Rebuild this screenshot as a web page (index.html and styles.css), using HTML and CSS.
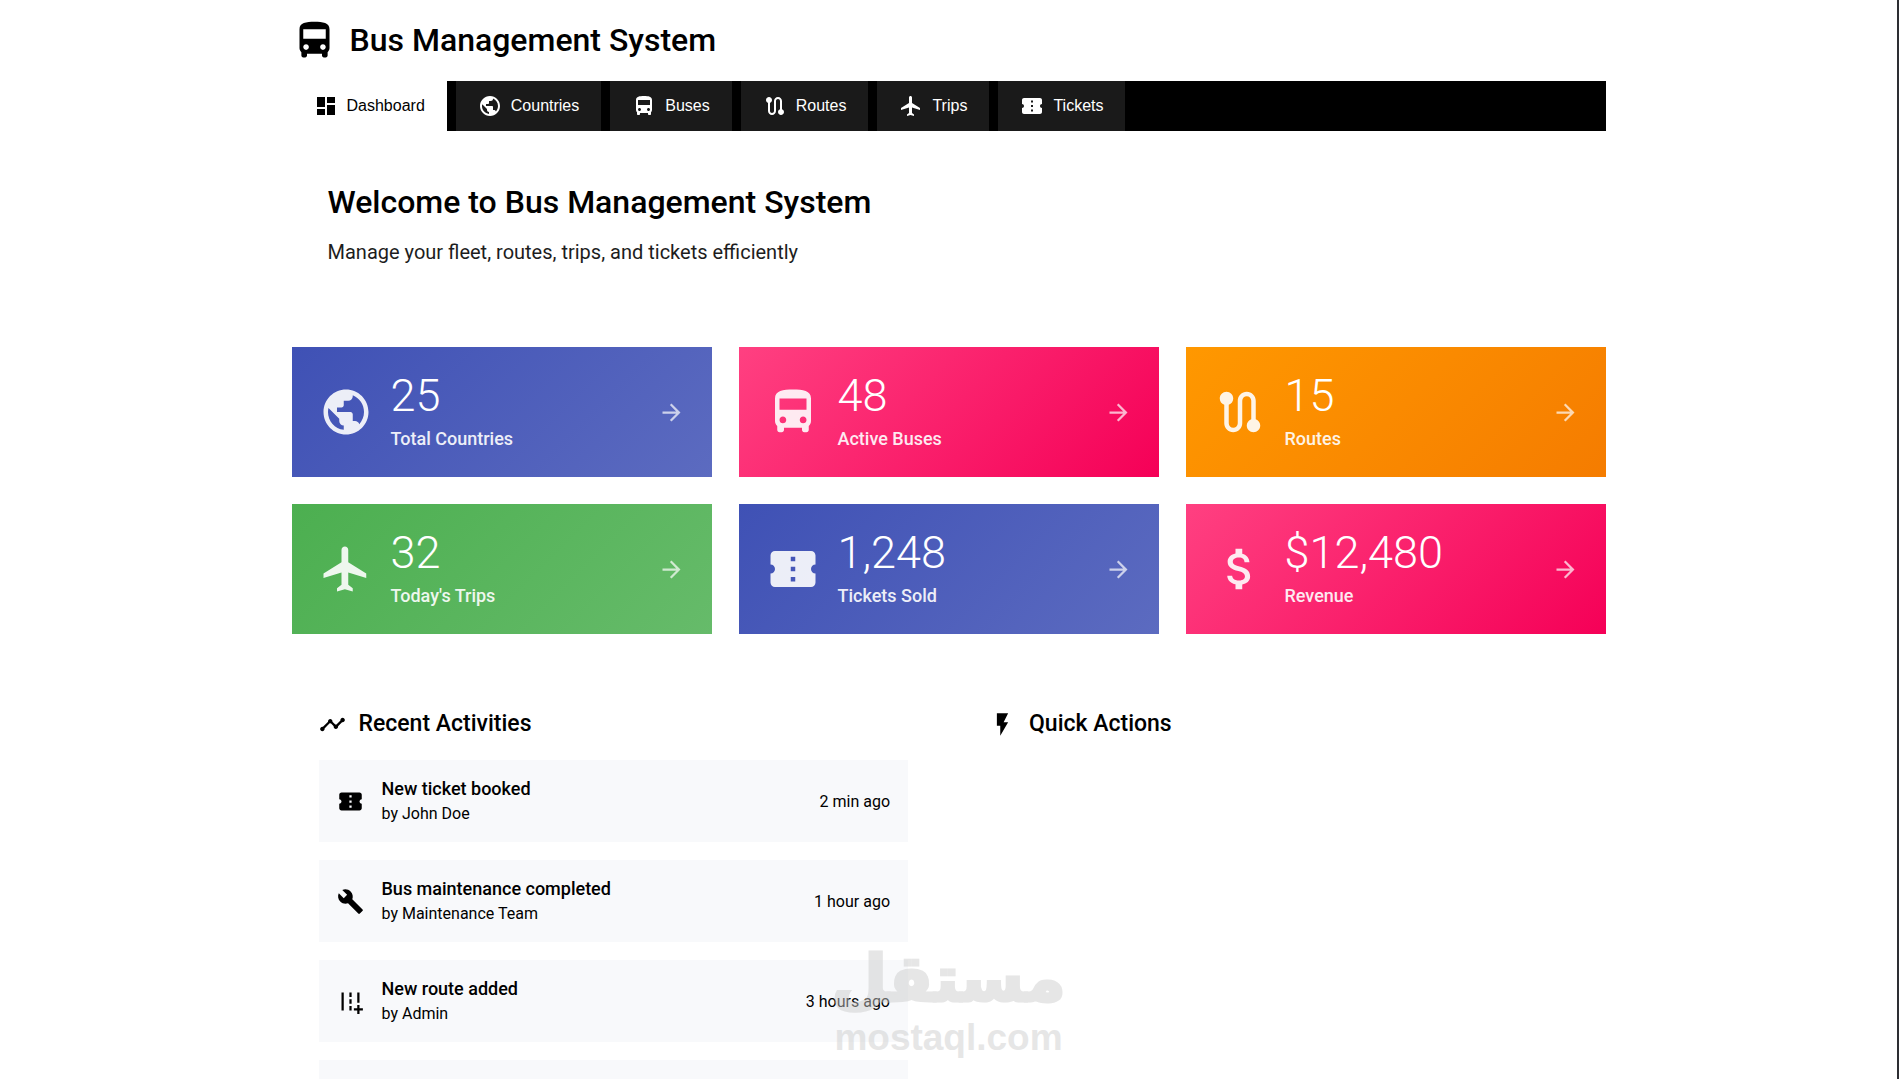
FILE: index.html
```html
<!DOCTYPE html>
<html lang="en">
<head>
    <meta charset="UTF-8">
    <meta name="viewport" content="width=device-width, initial-scale=1.0">
    <title>Bus Management System</title>
    <link rel="stylesheet" href="styles.css">
</head>
<body>

    <!-- Icon set -->
    <svg class="icon-sprite" aria-hidden="true">
        <symbol id="icon-bus" viewBox="0 0 24 24"><path d="M4 16c0 .88.39 1.67 1 2.22V20c0 .55.45 1 1 1h1c.55 0 1-.45 1-1v-1h8v1c0 .55.45 1 1 1h1c.55 0 1-.45 1-1v-1.78c.61-.55 1-1.34 1-2.22V6c0-3.5-3.58-4-8-4s-8 .5-8 4v10zm3.5 1c-.83 0-1.5-.67-1.5-1.5S6.67 14 7.5 14s1.5.67 1.5 1.5S8.33 17 7.5 17zm9 0c-.83 0-1.5-.67-1.5-1.5s.67-1.5 1.5-1.5 1.5.67 1.5 1.5-.67 1.5-1.5 1.5zm1.5-6H6V6h12v5z"/></symbol>
        <symbol id="icon-dashboard" viewBox="0 0 24 24"><path d="M3 13h8V3H3v10zm0 8h8v-6H3v6zm10 0h8V11h-8v10zm0-18v6h8V3h-8z"/></symbol>
        <symbol id="icon-globe" viewBox="0 0 24 24"><path d="M12 2C6.48 2 2 6.48 2 12s4.48 10 10 10 10-4.48 10-10S17.52 2 12 2zm-1 17.93c-3.95-.49-7-3.85-7-7.93 0-.62.08-1.21.21-1.79L9 15v1c0 1.1.9 2 2 2v1.93zm6.9-2.54c-.26-.81-1-1.39-1.9-1.39h-1v-3c0-.55-.45-1-1-1H8v-2h2c.55 0 1-.45 1-1V7h2c1.1 0 2-.9 2-2v-.41c2.93 1.19 5 4.06 5 7.41 0 2.08-.8 3.97-2.1 5.39z"/></symbol>
        <symbol id="icon-route" viewBox="0 0 24 24"><path d="M19 15.18V7c0-2.21-1.79-4-4-4s-4 1.79-4 4v10c0 1.1-.9 2-2 2s-2-.9-2-2V8.82C8.16 8.4 9 7.3 9 6c0-1.66-1.34-3-3-3S3 4.34 3 6c0 1.3.84 2.4 2 2.82V17c0 2.21 1.79 4 4 4s4-1.79 4-4V7c0-1.1.9-2 2-2s2 .9 2 2v8.18c-1.16.41-2 1.51-2 2.82 0 1.66 1.34 3 3 3s3-1.34 3-3c0-1.3-.84-2.4-2-2.82z"/></symbol>
        <symbol id="icon-plane" viewBox="0 0 24 24"><path d="M21 16v-2l-8-5V3.5c0-.83-.67-1.5-1.5-1.5S10 2.67 10 3.5V9l-8 5v2l8-2.5V19l-2 1.5V22l3.5-1 3.5 1v-1.5L13 19v-5.5l8 2.5z"/></symbol>
        <symbol id="icon-ticket" viewBox="0 0 24 24"><path d="M22 10V6c0-1.11-.9-2-2-2H4c-1.1 0-1.99.89-1.99 2v4c1.1 0 1.99.9 1.99 2s-.89 2-2 2v4c0 1.1.9 2 2 2h16c1.1 0 2-.9 2-2v-4c-1.1 0-2-.9-2-2s.9-2 2-2zm-9 7.5h-2v-2h2v2zm0-4.5h-2v-2h2v2zm0-4.5h-2v-2h2v2z"/></symbol>
        <symbol id="icon-money" viewBox="0 0 24 24"><path d="M11.8 10.9c-2.27-.59-3-1.2-3-2.15 0-1.09 1.01-1.85 2.7-1.85 1.78 0 2.44.85 2.5 2.1h2.21c-.07-1.72-1.12-3.3-3.21-3.81V3h-3v2.16c-1.94.42-3.5 1.68-3.5 3.61 0 2.31 1.91 3.46 4.7 4.13 2.5.6 3 1.48 3 2.41 0 .69-.49 1.79-2.7 1.79-2.06 0-2.87-.92-2.98-2.1h-2.2c.12 2.19 1.76 3.42 3.68 3.83V21h3v-2.15c1.95-.37 3.5-1.5 3.5-3.55 0-2.84-2.43-3.81-4.7-4.4z"/></symbol>
        <symbol id="icon-arrow" viewBox="0 0 24 24"><path d="M12 4l-1.41 1.41L16.17 11H4v2h12.17l-5.58 5.59L12 20l8-8z"/></symbol>
        <symbol id="icon-timeline" viewBox="0 0 24 24"><path d="M23 8c0 1.1-.9 2-2 2-.18 0-.35-.02-.51-.07l-3.56 3.55c.05.16.07.34.07.52 0 1.1-.9 2-2 2s-2-.9-2-2c0-.18.02-.36.07-.52l-2.55-2.55c-.16.05-.34.07-.52.07s-.36-.02-.52-.07l-4.55 4.56c.05.16.07.33.07.51 0 1.1-.9 2-2 2s-2-.9-2-2 .9-2 2-2c.18 0 .35.02.51.07l4.56-4.55C8.02 9.36 8 9.18 8 9c0-1.1.9-2 2-2s2 .9 2 2c0 .18-.02.36-.07.52l2.55 2.55c.16-.05.34-.07.52-.07s.36.02.52.07l3.55-3.56C19.02 8.35 19 8.18 19 8c0-1.1.9-2 2-2s2 .9 2 2z"/></symbol>
        <symbol id="icon-bolt" viewBox="0 0 24 24"><path d="M7 2v11h3v9l7-12h-4l4-8z"/></symbol>
        <symbol id="icon-wrench" viewBox="0 0 24 24"><path d="M22.7 19l-9.1-9.1c.9-2.3.4-5-1.5-6.9-2-2-5-2.4-7.4-1.3L9 6 6 9 1.6 4.7C.4 7.1.9 10.1 2.9 12.1c1.9 1.9 4.6 2.4 6.9 1.5l9.1 9.1c.4.4 1 .4 1.4 0l2.3-2.3c.5-.4.5-1.1.1-1.4z"/></symbol>
        <symbol id="icon-add-road" viewBox="0 0 24 24"><path d="M20 18v-3h-2v3h-3v2h3v3h2v-3h3v-2zM20 4h-2v9h2zM6 4H4v16h2zM13 4h-2v4h2zM13 10h-2v4h2zM13 16h-2v4h2z"/></symbol>
    </svg>

    <div class="container">
        <header class="header">
            <svg class="logo"><use href="#icon-bus"/></svg>
            <h1>Bus Management System</h1>
        </header>

        <nav class="navbar">
            <a class="active" href="#dashboard"><svg><use href="#icon-dashboard"/></svg>Dashboard</a>
            <a href="#countries"><svg><use href="#icon-globe"/></svg>Countries</a>
            <a href="#buses"><svg><use href="#icon-bus"/></svg>Buses</a>
            <a href="#routes"><svg><use href="#icon-route"/></svg>Routes</a>
            <a href="#trips"><svg><use href="#icon-plane"/></svg>Trips</a>
            <a href="#tickets"><svg><use href="#icon-ticket"/></svg>Tickets</a>
        </nav>

        <main>
            <section class="welcome">
                <h2>Welcome to Bus Management System</h2>
                <p>Manage your fleet, routes, trips, and tickets efficiently</p>
            </section>

            <!-- Stat cards -->
            <section class="stats">
                <a class="card indigo" href="#countries">
                    <svg class="card-icon"><use href="#icon-globe"/></svg>
                    <div class="card-body">
                        <div class="number">25</div>
                        <div class="label">Total Countries</div>
                    </div>
                    <svg class="arrow"><use href="#icon-arrow"/></svg>
                </a>
                <a class="card pink" href="#buses">
                    <svg class="card-icon"><use href="#icon-bus"/></svg>
                    <div class="card-body">
                        <div class="number">48</div>
                        <div class="label">Active Buses</div>
                    </div>
                    <svg class="arrow"><use href="#icon-arrow"/></svg>
                </a>
                <a class="card orange" href="#routes">
                    <svg class="card-icon"><use href="#icon-route"/></svg>
                    <div class="card-body">
                        <div class="number">15</div>
                        <div class="label">Routes</div>
                    </div>
                    <svg class="arrow"><use href="#icon-arrow"/></svg>
                </a>
                <a class="card green" href="#trips">
                    <svg class="card-icon"><use href="#icon-plane"/></svg>
                    <div class="card-body">
                        <div class="number">32</div>
                        <div class="label">Today's Trips</div>
                    </div>
                    <svg class="arrow"><use href="#icon-arrow"/></svg>
                </a>
                <a class="card indigo" href="#tickets">
                    <svg class="card-icon"><use href="#icon-ticket"/></svg>
                    <div class="card-body">
                        <div class="number">1,248</div>
                        <div class="label">Tickets Sold</div>
                    </div>
                    <svg class="arrow"><use href="#icon-arrow"/></svg>
                </a>
                <a class="card pink" href="#revenue">
                    <svg class="card-icon"><use href="#icon-money"/></svg>
                    <div class="card-body">
                        <div class="number">$12,480</div>
                        <div class="label">Revenue</div>
                    </div>
                    <svg class="arrow"><use href="#icon-arrow"/></svg>
                </a>
            </section>

            <div class="panels">
                <section class="panel">
                    <h3><svg><use href="#icon-timeline"/></svg>Recent Activities</h3>
                    <ul class="activities">
                        <li>
                            <svg><use href="#icon-ticket"/></svg>
                            <div class="activity-text">
                                <strong>New ticket booked</strong>
                                <span>by John Doe</span>
                            </div>
                            <time>2 min ago</time>
                        </li>
                        <li>
                            <svg><use href="#icon-wrench"/></svg>
                            <div class="activity-text">
                                <strong>Bus maintenance completed</strong>
                                <span>by Maintenance Team</span>
                            </div>
                            <time>1 hour ago</time>
                        </li>
                        <li>
                            <svg><use href="#icon-add-road"/></svg>
                            <div class="activity-text">
                                <strong>New route added</strong>
                                <span>by Admin</span>
                            </div>
                            <time>3 hours ago</time>
                        </li>
                        <li></li>
                    </ul>
                </section>

                <section class="panel">
                    <h3><svg><use href="#icon-bolt"/></svg>Quick Actions</h3>
                </section>
            </div>
        </main>
    </div>

    <div class="watermark">
        <div class="watermark-ar" lang="ar" dir="rtl">مستقل</div>
        <div class="watermark-en">mostaql.com</div>
    </div>

</body>
</html>
```

FILE: styles.css
```css
* {
    box-sizing: border-box;
}

body {
    margin: 0;
    position: relative;
    height: 100vh;
    overflow: hidden;
    background: #fff;
    border-right: 2px solid #2d2e32;
    color: #000;
    font-family: Roboto, sans-serif;
    font-size: 18px;
}

h1, h2, h3, p, ul {
    margin: 0;
    padding: 0;
}

h1, h2, h3 {
    font-weight: 500;
}

svg {
    flex-shrink: 0;
    fill: currentColor;
}

a {
    text-decoration: none;
}

.icon-sprite {
    display: none;
}

.container {
    max-width: 1314px;
    margin: 0 auto;
}

.header {
    display: flex;
    align-items: center;
    gap: 13px;
    padding: 18px 0;
}

.logo {
    width: 45px;
    height: 45px;
}

.header h1,
.welcome h2 {
    font-size: 32px;
    line-height: 46px;
}

.header h1 {
    line-height: 45px;
}

/* Navigation */
.navbar {
    display: flex;
    gap: 9px;
    background: #000;
    font-family: "Liberation Sans", Arial, sans-serif;
    font-size: 16px;
}

.navbar a {
    display: flex;
    align-items: center;
    gap: 9px;
    height: 50px;
    padding: 0 22px;
    background: #1a1a1a;
    color: #fff;
}

.navbar a.active {
    background: #fff;
    color: #000;
}

.navbar svg {
    width: 24px;
    height: 24px;
}

/* Welcome */
.welcome {
    padding: 48px 36px 81px;
}

.welcome p {
    margin-top: 13px;
    font-size: 20px;
    line-height: 28px;
    color: #1d1d1d;
}

/* Stat cards */
.stats {
    display: grid;
    grid-template-columns: repeat(3, 1fr);
    gap: 27px;
}

.card {
    display: flex;
    align-items: center;
    gap: 18px;
    height: 130px;
    padding: 27px;
    color: #fff;
}

.indigo {
    background: linear-gradient(135deg, #3f51b5, #5c6bc0);
}

.pink {
    background: linear-gradient(135deg, #ff4081, #f50057);
}

.orange {
    background: linear-gradient(135deg, #ff9800, #f57c00);
}

.green {
    background: linear-gradient(135deg, #4caf50, #66bb6a);
}

.card-icon {
    width: 54px;
    height: 54px;
    opacity: 0.9;
}

.card-body {
    flex: 1;
}

.number {
    font-size: 45px;
    font-weight: 300;
    line-height: 45px;
}

.label {
    margin-top: 8px;
    font-weight: 500;
    line-height: 25px;
    opacity: 0.9;
}

.arrow {
    width: 27px;
    height: 27px;
    opacity: 0.7;
}

/* Panels */
.panels {
    display: grid;
    grid-template-columns: 1fr 1fr;
    gap: 27px;
    margin-top: 48px;
}

.panel {
    padding: 27px;
}

.panel h3 {
    display: flex;
    align-items: center;
    gap: 13px;
    font-size: 23px;
    line-height: 30px;
}

.panel h3 svg,
.activities svg {
    width: 27px;
    height: 27px;
}

.activities {
    margin-top: 21px;
    list-style: none;
}

.activities li {
    display: flex;
    align-items: center;
    gap: 18px;
    height: 82px;
    margin-bottom: 18px;
    padding: 16px 18px;
    background: #f8f9fb;
}

.activity-text {
    flex: 1;
}

.activity-text strong {
    display: block;
    font-weight: 500;
    line-height: 25px;
}

.activity-text span {
    display: block;
    font-size: 16px;
    line-height: 25px;
}

.activities time {
    font-size: 16px;
}

/* Watermark over the page */
.watermark {
    position: absolute;
    left: 0;
    right: 0;
    bottom: 20px;
    color: #ccc;
    text-align: center;
    font-weight: bold;
    opacity: 0.48;
    pointer-events: none;
}

.watermark-ar {
    font-family: "DejaVu Sans", sans-serif;
    font-size: 64px;
    line-height: 76px;
    -webkit-text-stroke: 3px #ccc;
}

.watermark-en {
    font-family: "Liberation Sans", Arial, sans-serif;
    font-size: 37px;
    line-height: 42px;
}
```
